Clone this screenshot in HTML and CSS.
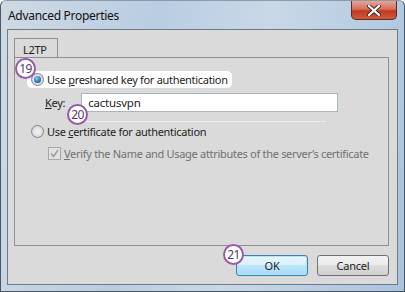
FILE: index.html
```html
<!DOCTYPE html>
<html lang="en">
  <head>
    <meta charset="UTF-8">
    <title>Advanced Properties</title>
    <link rel="stylesheet" href="styles.css">
  </head>
  <body>
    <div class="window">
      <div class="titlebar">
        <span class="title">Advanced Properties</span>
        <button class="close-btn" aria-label="Close">
          <svg width="14" height="11" viewBox="0 0 14 11">
            <path d="M2 1 L12 10 M12 1 L2 10" stroke="#3c2a28" stroke-width="4" stroke-linecap="round"/>
            <path d="M2 1 L12 10 M12 1 L2 10" stroke="#ffffff" stroke-width="2.2" stroke-linecap="round"/>
          </svg>
        </button>
      </div>
      <div class="client">
        <div class="tabs">
          <div class="tab">L2TP</div>
        </div>
        <div class="panel">
          <span class="badge badge-19">19</span>
          <span class="badge badge-20">20</span>
          <div class="option highlight">
            <span class="radio checked"></span>
            <span>Use <u>p</u>reshared key for authentication</span>
          </div>
          <div class="key-row">
            <label for="key"><u>K</u>ey:</label>
            <input id="key" type="text" value="cactusvpn">
          </div>
          <div class="divider"></div>
          <div class="option">
            <span class="radio"></span>
            <span>Use <u>c</u>ertificate for authentication</span>
          </div>
          <div class="check-row">
            <span class="checkbox">
              <svg width="9" height="9" viewBox="0 0 9 9">
                <path d="M1 4.5 L3.5 7.5 L8 1" fill="none" stroke="#9a9a9a" stroke-width="1.4"/>
              </svg>
            </span>
            <span><u>V</u>erify the Name and Usage attributes of the server’s certificate</span>
          </div>
        </div>
        <div class="buttons">
          <span class="badge badge-21">21</span>
          <button class="btn default">OK</button>
          <button class="btn">Cancel</button>
        </div>
      </div>
    </div>
  </body>
</html>
```

FILE: styles.css
```css
/* Janela estilo Windows 7 */
body {
    margin: 0;
    font-family: 'Noto Sans', 'Open Sans', Arial, sans-serif;
    font-size: 11px;
    letter-spacing: -0.3px;
    color: #1e1e1e;
    white-space: nowrap;
}

.window {
    width: 405px;
    height: 292px;
    box-sizing: border-box;
    display: flex;
    flex-direction: column;
    background: linear-gradient(100deg, #cfd9e3 0%, #b9cde2 35%, #c9d8e7 60%, #a9c3df 100%);
    border: 1px solid #4a5664;
    border-top-color: #8a9aab;
    border-radius: 6px 6px 0 0;
    padding: 0 6px 6px;
}

.titlebar {
    height: 28px;
    display: flex;
    align-items: flex-start;
    justify-content: space-between;
}

.title {
    margin: 6px 0 0 1px;
    font-size: 12px;
    color: #111;
}

.close-btn {
    width: 46px;
    height: 19px;
    margin-right: 1px;
    border: 1px solid #5b2a22;
    border-top: none;
    border-radius: 0 0 5px 5px;
    background: linear-gradient(#e6a495 0%, #d56f5a 45%, #c03a22 55%, #cf5a3c 100%);
    display: flex;
    align-items: center;
    justify-content: center;
    padding: 0;
}

/* Área cliente */
.client {
    flex: 1;
    background: #dadada;
    border: 1px solid #6f7a86;
    padding: 7px 8px 7px 6px;
    display: flex;
    flex-direction: column;
}

.tabs {
    display: flex;
    height: 20px;
}

.tab {
    width: 44px;
    box-sizing: border-box;
    border: 1px solid #8e8f8f;
    border-bottom: none;
    background: #dadada;
    padding: 3px 0 0 8px;
    position: relative;
    top: 1px;
}

.panel {
    height: 189px;
    box-sizing: border-box;
    border: 1px solid #8e8f8f;
    position: relative;
    padding: 13px 12px 0 12px;
}

.option {
    display: flex;
    align-items: center;
    gap: 3px;
    height: 17px;
    padding-left: 4px;
}

.highlight {
    width: fit-content;
    padding-right: 4px;
    background: #ffffff;
    border-radius: 5px;
}

.radio {
    width: 11px;
    height: 11px;
    border-radius: 50%;
    border: 1px solid #7d8590;
    background: radial-gradient(circle, #ececec 30%, #c9c9c9 100%);
    position: relative;
}

.radio.checked::after {
    content: '';
    position: absolute;
    left: 2px;
    top: 2px;
    width: 7px;
    height: 7px;
    border-radius: 50%;
    background: radial-gradient(circle at 40% 35%, #8fd0f5 0%, #2a79b8 55%, #10416e 100%);
}

.key-row {
    display: flex;
    align-items: center;
    margin: 5px 0 0 18px;
    gap: 16px;
}

.key-row input {
    width: 257px;
    height: 19px;
    box-sizing: border-box;
    border: 1px solid #a9b6bd;
    background: #ffffff;
    font-family: inherit;
    font-size: 11.5px;
    letter-spacing: -0.2px;
    padding: 0 6px;
    color: #1e1e1e;
    outline: none;
}

.divider {
    width: 245px;
    height: 1px;
    background: #e7ecec;
    margin: 9px 0 0 54px;
}

.divider + .option {
    margin-top: 1px;
}

.check-row {
    display: flex;
    align-items: center;
    gap: 3px;
    margin: 6px 0 0 21px;
    color: #707070;
}

.checkbox {
    width: 11px;
    height: 11px;
    border: 1px solid #a8a8a8;
    background: #e2e2e2;
    display: flex;
    align-items: center;
    justify-content: center;
}

/* Botões */
.buttons {
    display: flex;
    justify-content: flex-end;
    gap: 9px;
    margin-top: 9px;
    position: relative;
}

.btn {
    width: 72px;
    height: 21px;
    box-sizing: border-box;
    border: 1px solid #707070;
    border-radius: 3px;
    background: linear-gradient(#f2f2f2 0%, #ebebeb 45%, #dddddd 50%, #cfcfcf 100%);
    font-family: inherit;
    font-size: 11px;
    letter-spacing: -0.2px;
    color: #1e1e1e;
    padding: 0;
}

.btn.default {
    border-color: #3c7fb1;
    background: linear-gradient(#eaf6fd 0%, #d9f0fc 45%, #bee6fd 50%, #a7d9f5 100%);
    box-shadow: inset 0 0 0 1px #b5e4f7;
}

/* Marcadores numerados */
.badge {
    position: absolute;
    width: 17px;
    height: 17px;
    border: 2px solid #9a5aa8;
    border-radius: 50%;
    background: #ffffff;
    color: #5b3c64;
    font-size: 12px;
    line-height: 17px;
    text-align: center;
    letter-spacing: -0.5px;
    z-index: 2;
}

.badge-19 {
    left: 0;
    top: 0;
}

.badge-20 {
    left: 52px;
    top: 46px;
}

.badge-21 {
    left: 209px;
    top: -11px;
}
```
